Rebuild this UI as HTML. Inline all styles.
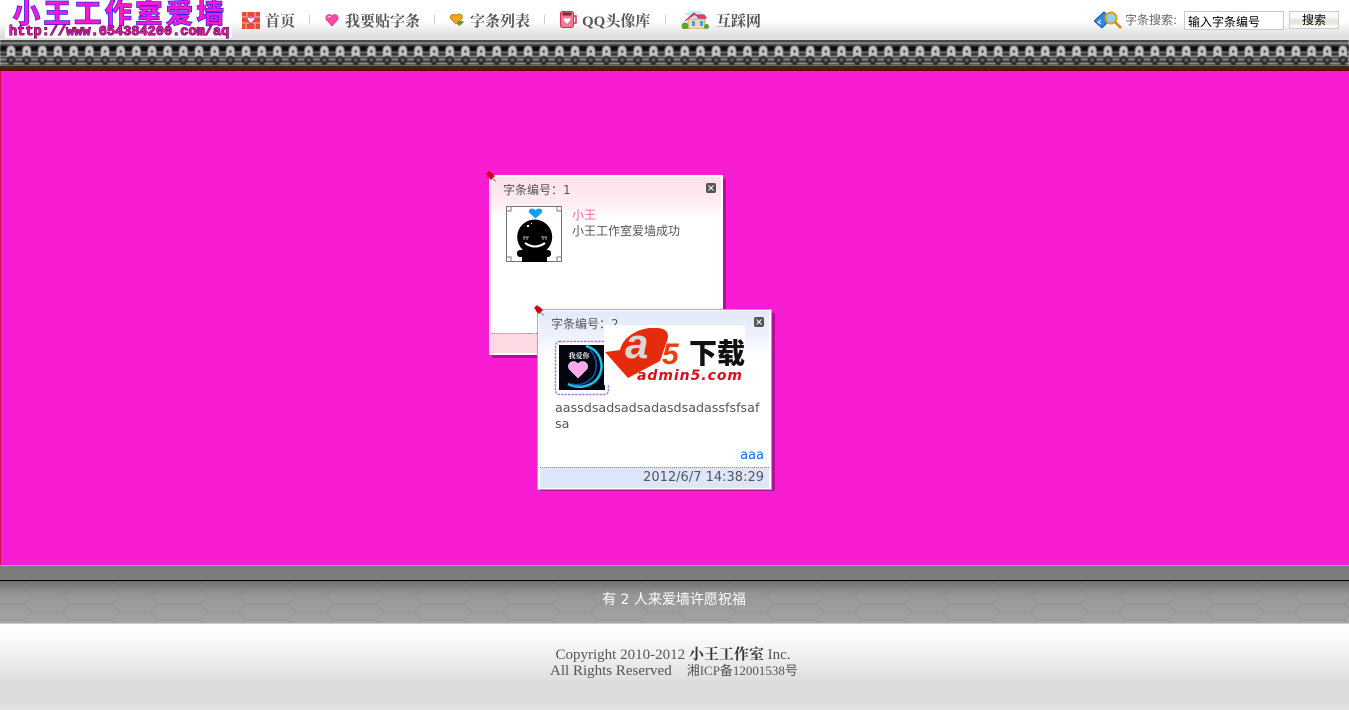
<!DOCTYPE html>
<html><head><meta charset="utf-8"><style>
html,body{margin:0;padding:0;width:1349px;height:710px;overflow:hidden;background:#fff}
body{position:relative;font:13px "DejaVu Sans","WenQuanYi Zen Hei",sans-serif;color:#555}
.a{position:absolute;white-space:nowrap}
.nav{font:bold 15px "Liberation Serif","Noto Serif CJK SC",serif;color:#555;top:13px;line-height:18px}
.sep{position:absolute;top:15px;width:1px;height:9px;background:#ccc}
.cjk{font-family:"DejaVu Sans","WenQuanYi Zen Hei",sans-serif;font-size:12px;color:#555}
svg{position:absolute;display:block}
</style></head><body>
<div class="a" style="left:0;top:0;width:1349px;height:40px;background:linear-gradient(#fff 0,#fff 22px,#f2f2f2 27px,#dcdcdc 37px,#e4e4e4 40px)"></div>
<div class="a" style="left:5px;top:0;width:227px;height:38px;background:#fff"></div>
<div class="a" style="left:13px;top:-5px;font:bold 27px 'Noto Sans CJK SC',sans-serif;letter-spacing:3.6px;line-height:34px;color:#fb1ad0;-webkit-text-stroke:1.5px #2222ff;paint-order:stroke fill">小王工作室爱墙</div>
<div class="a" style="left:9px;top:25px;font:bold 13.6px 'Liberation Mono',monospace;line-height:15px;color:#e018a8;-webkit-text-stroke:1px #400030;paint-order:stroke fill">http://www.654384200.com/aq</div>

<svg style="left:242px;top:12px" width="18" height="17" viewBox="0 0 18 17"><rect width="18" height="17" fill="#e8483d"/><path d="M0 5h18M0 11h18M5 0v5M13 0v5M4 11v6M13 11v6" stroke="#f8c0a8"/><path d="M9 12L5 7.500C5 4.500 8 4.500 9 6C10 4.500 13 4.500 13 7.500Z" fill="#fff" stroke="#e0309a"/></svg>
<div class="a nav" style="left:265px">首页</div><div class="sep" style="left:309px"></div>
<svg style="left:325px;top:13px" width="14" height="14" viewBox="0 0 14 14"><path d="M7 13L1 6.500C-.5 2.500 5 -.5 7 3C9 -.5 14.500 2.500 13 6.500Z" fill="#f84aa0" stroke="#e02a85" stroke-width=".6"/><path d="M3 5C3 3.500 5 3 6 4" stroke="#ffd0e8" fill="none"/></svg>
<div class="a nav" style="left:345px">我要贴字条</div><div class="sep" style="left:434px"></div>
<svg style="left:450px;top:13px" width="16" height="14" viewBox="0 0 16 14"><path d="M9 13L5 8h9L12 11Z" fill="#5a9a30"/><path d="M6 11L.5 5.500C-.5 2 4 0 6 2.500C8 -.5 13.500 1 12 5.500Z" fill="#f5a41e" stroke="#b46a10" stroke-width=".7"/></svg>
<div class="a nav" style="left:470px">字条列表</div><div class="sep" style="left:544px"></div>
<svg style="left:560px;top:11px" width="17" height="18" viewBox="0 0 17 18"><rect x=".5" y=".5" width="13" height="16" rx="2" fill="#f57a96" stroke="#d82a5a"/><rect x="2.500" y="1.500" width="9" height="3" fill="#7a2a30"/><path d="M13 5h3v7h-3" fill="none" stroke="#d82a5a" stroke-width="1.500"/><path d="M7 13L3.500 9C3.500 6.500 6 6.500 7 8C8 6.500 10.500 6.500 10.500 9Z" fill="#fff"/></svg>
<div class="a nav" style="left:582px">QQ头像库</div><div class="sep" style="left:665px"></div>
<svg style="left:681px;top:11px" width="28" height="18" viewBox="0 0 28 18"><path d="M3 3L10 0H20L24 5L16 9Z" fill="#bfeefa"/><rect x="7" y="8" width="17" height="10" fill="#f1d7b5" stroke="#a07050" stroke-width=".6"/><path d="M4 10L13 2L18 7H25L23 4H14" fill="#f0406a" stroke="#d02050"/><rect x="11" y="10" width="3" height="5" fill="#4a9ce0"/><rect x="19" y="10" width="3" height="5" fill="#4a9ce0"/><circle cx="4" cy="15" r="3.500" fill="#58a830"/><circle cx="25.500" cy="15.500" r="2.500" fill="#58a830"/></svg>
<div class="a nav" style="left:716px">互踩网</div>

<svg style="left:1094px;top:10px" width="28" height="20" viewBox="0 0 28 20"><path d="M0 11L10 2L17 9L8 18Z" fill="#2f88e0" stroke="#1a5aa8"/><path d="M7 10L4 12L7 14" stroke="#fff" fill="none"/><circle cx="17" cy="8" r="5.500" fill="#8fd4f4" stroke="#e0a010" stroke-width="2"/><path d="M21 12L27 18" stroke="#d8801a" stroke-width="2.500"/></svg>
<div class="a cjk" style="left:1125px;top:12px;line-height:16px;color:#666">字条搜索:</div>
<div class="a" style="left:1184px;top:11px;width:98px;height:17px;background:#fff;border:1px solid #c8c8c8;font:12px/20px 'WenQuanYi Zen Hei',sans-serif;color:#000;text-indent:3px;overflow:hidden">输入字条编号</div>
<div class="a" style="left:1289px;top:11px;width:48px;height:16px;border:1px solid #ccc;background:linear-gradient(#fafafa 0,#fafafa 5px,#e4e8d8 8px,#e4e8d8 11px,#fafafa 14px);font:12px/17px 'WenQuanYi Zen Hei',sans-serif;color:#000;text-align:center">搜索</div>

<!-- roof -->
<svg style="left:0;top:40px" width="1349" height="31"><defs><filter id="b" x="0" y="0" width="1" height="1"><feGaussianBlur stdDeviation=".45"/></filter><pattern id="r" x="3" width="15.67" height="31" patternUnits="userSpaceOnUse"><rect width="15.67" height="31" fill="#3c3c3c"/><rect width="15.67" height="2" fill="#1c1c1c"/><rect y="2" width="15.67" height="2" fill="#8a8a8a"/><rect y="4" width="15.67" height="2" fill="#444"/><rect y="6" width="15.67" height="5" fill="#0c0c0c"/><rect y="12" width="15.67" height="1" fill="#777"/><rect y="14" width="15.67" height="1" fill="#222"/><rect y="16" width="15.67" height="1" fill="#999"/><rect y="19" width="15.67" height="1" fill="#aaa"/><rect y="23" width="15.67" height="1" fill="#aaa"/><path d="M4 17V10C4 7 6 6 8 6C10 6 12 7 12 10V17Z" fill="#c8c8c8"/><rect x="7" y="10" width="2" height="3" fill="#000"/><circle cx="8" cy="20" r="4" fill="#333" stroke="#1c1c1c"/><circle cx="8" cy="20" r="1.500" fill="#707070"/></pattern></defs><rect width="1349" height="26" fill="url(#r)" filter="url(#b)"/><rect y="26" width="1349" height="3" fill="#4a2018"/><rect y="29" width="1349" height="2" fill="#6a0008"/></svg>

<!-- wall -->
<div class="a" style="left:0;top:71px;width:1348px;height:494px;background:#f81dd2;border-left:1px solid #c81050"></div>

<!-- card 1 -->
<div class="a" style="left:492px;top:179px;width:234px;height:179px;background:#b0109a"></div>
<div class="a" style="left:489px;top:175px;width:230px;height:176px;border:2px solid #fff;border-left-color:#fde;background:linear-gradient(#fde0e8 0,#feecf1 25px,#fff 40px);"></div>
<div class="a" style="left:491px;top:333px;width:230px;height:19px;background:#fdd9e3;border-top:1px dotted #f07090"></div>
<svg style="left:486px;top:171px" width="11" height="11" viewBox="0 0 11 11"><path d="M0 3L3 0L5 2L5.500 1.500L9 5L5 9L1.500 5.500L2 5Z" fill="#d00010"/><path d="M6 7L10 10.500" stroke="#888"/></svg>
<div class="a cjk" style="left:503px;top:182px;line-height:16px">字条编号：1</div>
<svg style="left:706px;top:183px" width="10" height="10"><rect width="10" height="10" rx="2" fill="#555"/><path d="M2.500 2.500L7.500 7.500M7.500 2.500L2.500 7.500" stroke="#fff"/></svg>
<svg style="left:506px;top:206px" width="56" height="56" viewBox="0 0 56 56"><rect x=".5" y=".5" width="55" height="55" fill="#fff" stroke="#777"/><path d="M1 5h4V1M51 1v4h4M1 51h4v4M51 55v-4h4" stroke="#777" fill="#fff"/><path d="M29.500 12.500L23 6.500C22 2 28 1.500 29.500 4.500C31 1.500 37 2 36 6.500Z" fill="#0aa0f8"/><circle cx="28.700" cy="31" r="17.500" fill="#000"/><rect x="11" y="44" width="34" height="7" rx="3" fill="#000"/><rect x="16" y="44" width="25" height="12" fill="#000"/><path d="M19 37Q29 44 39 37" stroke="#fff" stroke-width="2" fill="none"/><path d="M17 31h6M35 31h6M18 31v3M21 31v3M37 31v3M40 31v3" stroke="#aaa"/><rect x="21" y="19" width="2" height="2" fill="#fff"/><rect x="25" y="17" width="1" height="1" fill="#fff"/></svg>
<div class="a cjk" style="left:572px;top:207px;line-height:16px;color:#f0609a">小王</div>
<div class="a cjk" style="left:572px;top:223px;line-height:16px">小王工作室爱墙成功</div>

<!-- card 2 -->
<div class="a" style="left:541px;top:313px;width:234px;height:178px;background:#b0109a"></div>
<div class="a" style="left:537px;top:309px;width:233px;height:179px;border:1px solid #8fa8ef;background:#fff"></div>
<div class="a" style="left:539px;top:311px;width:230px;height:176px;background:linear-gradient(#e3e9fb 0,#eef2fd 25px,#fff 45px)"></div>
<div class="a" style="left:540px;top:467px;width:229px;height:20px;background:#dfe6fb;border-top:1px dotted #8088c8"></div>
<svg style="left:534px;top:305px" width="11" height="11" viewBox="0 0 11 11"><path d="M0 3L3 0L5 2L5.500 1.500L9 5L5 9L1.500 5.500L2 5Z" fill="#d00010"/><path d="M6 7L10 10.500" stroke="#888"/></svg>
<div class="a cjk" style="left:551px;top:316px;line-height:16px">字条编号：2</div>
<svg style="left:754px;top:317px" width="10" height="10"><rect width="10" height="10" rx="2" fill="#555"/><path d="M2.500 2.500L7.500 7.500M7.500 2.500L2.500 7.500" stroke="#fff"/></svg>
<svg style="left:554px;top:340px" width="56" height="56" viewBox="0 0 56 56"><rect x="1.500" y="1.500" width="53" height="53" rx="4" fill="#fff" stroke="#a880dc" stroke-dasharray="2.500 1" stroke-width="1.500"/><rect x="5" y="5" width="46" height="45" fill="#050510"/><path d="M32 6C46 10 50 24 46 34C41 46 26 50 14 44" fill="none" stroke="#19c0e8" stroke-width="2.500"/><path d="M36 10C44 18 44 30 38 38C32 44 24 46 18 44" fill="none" stroke="#0a5ab0" stroke-width="1.500"/><path d="M24 38L15 29C12 22 21 19 24 24C27 19 36 22 33 29Z" fill="#fba8ef" stroke="#fff" stroke-width=".5"/><text x="25" y="18" font-size="7" font-family="Noto Serif CJK SC,serif" font-weight="bold" fill="#fff" text-anchor="middle">我爱你</text></svg>
<div class="a" style="left:555px;top:400px;font-size:12.7px;line-height:16px;width:209px;white-space:normal;word-break:break-all;color:#555">aassdsadsadsadasdsadassfsfsafsa</div>
<div class="a" style="right:585px;top:448px;font-size:13px;line-height:16px;color:#0a6cf0">aaa</div>
<div class="a" style="right:585px;top:470px;font-size:13px;line-height:16px;color:#555">2012/6/7 14:38:29</div>

<!-- watermark -->
<div class="a" style="left:604px;top:325px;width:141px;height:60px;background:#fff"></div>
<svg style="left:604px;top:325px" width="142" height="60" viewBox="0 0 142 60"><path d="M1 27L16 25C19 11 36 2 52 3C62 3 66 8 63 16L56 36L24 53Z" fill="#e42c0c"/><text x="21" y="33" font-family="Liberation Sans,sans-serif" font-weight="bold" font-style="italic" font-size="42" fill="#d8d8d8">a</text><text x="58" y="39" font-family="Liberation Sans,sans-serif" font-weight="bold" font-style="italic" font-size="30" fill="#e84010">5</text><text x="85" y="38" font-family="Noto Sans CJK SC,sans-serif" font-weight="900" font-size="28" fill="#111">下载</text><text x="33" y="55" font-family="DejaVu Sans,sans-serif" font-weight="bold" font-style="italic" font-size="14" fill="#d8101c" textLength="105">admin5.com</text></svg>

<!-- bottom -->
<div class="a" style="left:0;top:565px;width:1349px;height:15px;background:#7d7d7d;border-top:1px solid #aaa;box-sizing:border-box"></div>
<div class="a" style="left:0;top:580px;width:1349px;height:1px;background:#000"></div>
<div class="a" style="left:0;top:581px;width:1349px;height:42px;background:linear-gradient(#707070,#979797 14px,#a4a4a4)"></div>
<svg style="left:0;top:581px" width="1349" height="42"><defs><pattern id="h" width="88" height="16" x="24" y="-1" patternUnits="userSpaceOnUse"><path d="M0 8L8 0H38L46 8H88M46 8L38 16H8L0 8" fill="none" stroke="#808080" stroke-width="1"/></pattern></defs><rect width="1349" height="42" fill="url(#h)" opacity=".4"/></svg>
<div class="a" style="left:0;top:623px;width:1349px;height:1px;background:#ccc"></div>
<div class="a" style="left:0;top:624px;width:1349px;height:86px;background:linear-gradient(#fff 0,#fff 5px,#eee 35px,#dcdcdc 60px,#dcdcdc 78px,#e6e6e6 86px)"></div>
<div class="a" style="left:0;width:1348px;text-align:center;top:592px;font-size:14px;line-height:16px;color:#fff;font-family:'DejaVu Sans','WenQuanYi Zen Hei',sans-serif">有 2 人来爱墙许愿祝福</div>
<div class="a" style="left:0;width:1346px;text-align:center;top:647px;font:15px/16px 'Liberation Serif','Noto Serif CJK SC',serif;color:#555">Copyright 2010-2012 <b style="color:#333">小王工作室</b> Inc.</div>
<div class="a" style="left:0;width:1348px;text-align:center;top:663px;font:15px/16px 'Liberation Serif','Noto Sans CJK SC',serif;color:#555">All Rights Reserved &nbsp;&nbsp; <span style="font-size:13px">湘ICP备12001538号</span></div>
</body></html>
